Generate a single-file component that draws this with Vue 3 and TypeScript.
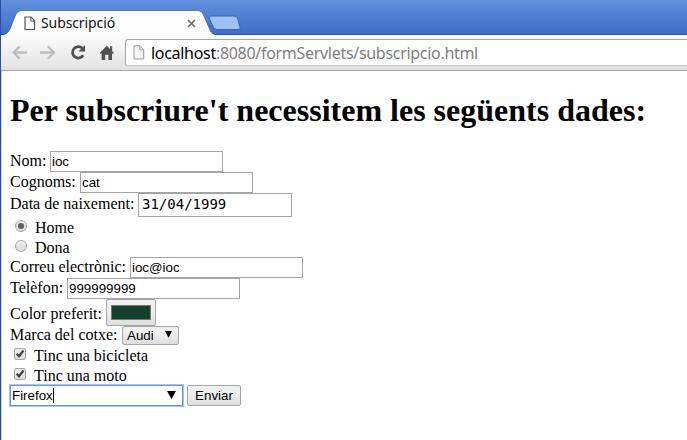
<script setup lang="ts">
import { ref } from 'vue'

const nom = ref('ioc')
const cognoms = ref('cat')
const naixement = ref('31/04/1999')
const sexe = ref('Home')
const correu = ref('ioc@ioc')
const telefon = ref('999999999')
const navegador = ref('Firefox')
const vehicles = ref([
  { label: 'Tinc una bicicleta', checked: true },
  { label: 'Tinc una moto', checked: true },
])
</script>

<template>
  <div class="window">
    <header class="titlebar">
      <div class="tab">
        <svg class="tab-shape" width="216" height="26" viewBox="0 0 216 26">
          <defs>
            <linearGradient id="tabfill" x1="0" y1="0" x2="0" y2="1">
              <stop offset="0" stop-color="#ffffff" />
              <stop offset="1" stop-color="#fcfcfc" />
            </linearGradient>
          </defs>
          <path d="M0 25 C5 25 7 23 9 19 L15 4 Q17 .5 21 .5 H197 Q200 .5 202 4 L209 20 Q211 25 216 25 V26 H0Z" fill="url(#tabfill)" />
          <path d="M0 24.5 C5 24.5 7 23 9 19 L15 4 Q17 .5 21 .5 H197 Q200 .5 202 4 L209 20 Q211 24.5 216 24.5" fill="none" stroke="#2f549f" stroke-opacity=".65" />
        </svg>
        <svg class="tab-page" width="12" height="15" viewBox="0 0 12 15">
          <path d="M1 1H7L10.5 4.7V13.5H1Z" fill="#fff" stroke="#565656" stroke-width="1.2" />
          <path d="M6.8 1V5H10.5" fill="none" stroke="#565656" />
        </svg>
        <span class="tab-title">Subscripció</span>
        <svg class="tab-close" width="9" height="9" viewBox="0 0 9 9">
          <path d="M1 1L8 8M8 1L1 8" stroke="#6b6b6b" stroke-width="1.7" />
        </svg>
      </div>
      <svg class="new-tab" width="33" height="16" viewBox="0 0 33 16">
        <path d="M3.5 1H26Q28.5 1 29.5 3.3L32 12.3Q32.5 14.5 30 14.5H9Q6.5 14.5 5.5 12.3L1.3 3.4Q.5 1 3.5 1Z" fill="#9dc1f1" stroke="#3c67b3" />
      </svg>
    </header>

    <nav class="toolbar">
      <svg class="nav-icons" width="104" height="20" viewBox="0 0 104 20">
        <g fill="none" stroke="#bdbdbd" stroke-width="2.4" stroke-linecap="round" stroke-linejoin="round">
          <path d="M2.5 10.5H15M8 5L2.5 10.5L8 16" />
          <path d="M30 10.5H43M37.5 5L43 10.5L37.5 16" />
        </g>
        <path d="M71.4 6.4A5.7 5.7 0 1 0 72.2 13.2" fill="none" stroke="#505050" stroke-width="2.8" />
        <path d="M74 3V9.6H67.5Z" fill="#505050" />
        <path d="M88.8 11L95.8 3.7L99.2 7.2V4.2H101.2V9.2L102.9 11L101.8 12L101 11.3V18H97.4V12.7H94.2V18H90.6V11.3L89.8 12Z" fill="#505050" />
      </svg>
      <div class="address">
        <svg width="12" height="15" viewBox="0 0 12 15">
          <path d="M1 .8H7L10.7 4.6V14H1Z" fill="#f6f6f6" stroke="#9b9b9b" />
          <path d="M6.8 .8V4.8H10.7" fill="none" stroke="#9b9b9b" />
        </svg>
        <span class="url"><span class="host">localhost</span>:8080/formServlets/subscripcio.html</span>
      </div>
    </nav>

    <main class="page">
      <h1>Per subscriure't necessitem les següents dades:</h1>
      <form @submit.prevent>
        <label class="row text-row"><span class="label nom">Nom:</span><input v-model="nom" class="field" type="text" /></label>
        <label class="row text-row"><span class="label cognoms">Cognoms:</span><input v-model="cognoms" class="field" type="text" /></label>
        <label class="row date-row"><span class="label data">Data de naixement:</span><input v-model="naixement" class="field date" type="text" /></label>
        <label v-for="opcio in ['Home', 'Dona']" :key="opcio" class="row choice-row">
          <input v-model="sexe" class="hidden-control" type="radio" :value="opcio" />
          <span class="radio" :class="{ on: sexe === opcio }"></span>
          <span class="choice-label">{{ opcio }}</span>
        </label>
        <label class="row text-row"><span class="label correu">Correu electrònic:</span><input v-model="correu" class="field" type="text" /></label>
        <label class="row text-row"><span class="label telefon">Telèfon:</span><input v-model="telefon" class="field" type="text" /></label>
        <div class="row color-row"><span class="label color">Color preferit:</span><button class="color-button" type="button"><span class="swatch"></span></button></div>
        <div class="row select-row">
          <span class="label marca">Marca del cotxe:</span>
          <button class="select" type="button">Audi
            <svg width="7" height="7" viewBox="0 0 7 7"><path d="M0 0H7L3.5 6.8Z" fill="#000" /></svg>
          </button>
        </div>
        <label v-for="v in vehicles" :key="v.label" class="row choice-row">
          <input v-model="v.checked" class="hidden-control" type="checkbox" />
          <span class="check">
            <svg v-if="v.checked" width="12" height="12" viewBox="0 0 12 12"><path d="M2.7 5.8L5 8.2L9.5 2.5" fill="none" stroke="#444" stroke-width="2.3" /></svg>
          </span>
          <span class="choice-label">{{ v.label }}</span>
        </label>
        <div class="row text-row">
          <div class="combo">
            <span>{{ navegador }}</span><i class="caret"></i>
            <svg width="9" height="8" viewBox="0 0 9 8"><path d="M0 0H9L4.5 8Z" fill="#000" /></svg>
          </div>
          <button class="submit" type="submit">Enviar</button>
        </div>
      </form>
    </main>
  </div>
</template>

<style>
body {
  overflow: hidden;
}
</style>

<style scoped>
.window {
  box-sizing: border-box;
  width: 687px;
  height: 440px;
  background: #fff;
  border-left: 1px solid #2b4f9c;
  box-shadow: inset 1px 0 #c3cee3;
  overflow: hidden;
}
.titlebar {
  box-sizing: border-box;
  display: flex;
  height: 35px;
  padding-top: 10px;
  background: linear-gradient(#6191dd, #3f6ec8 94%);
  box-shadow: inset 0 -1px #31559f;
}
.tab {
  position: relative;
  display: flex;
  align-items: flex-start;
  width: 208px;
  height: 26px;
  flex: none;
}
.tab-shape {
  position: absolute;
  left: 0;
  top: 0;
}
.tab-page {
  position: relative;
  margin: 6px 0 0 23px;
}
.tab-title {
  position: relative;
  width: 146px;
  margin: 4px 0 0 5px;
  font: 14px/18px "Noto Sans", sans-serif;
  letter-spacing: -0.1px;
  color: #111;
}
.tab-close {
  position: relative;
  margin-top: 9px;
}
.new-tab {
  margin-top: 5px;
  margin-left: -1px;
}
.toolbar {
  box-sizing: border-box;
  display: flex;
  height: 36px;
  padding-top: 4px;
  background: linear-gradient(#fcfcfc, #e2e2e2);
  border-bottom: 1px solid #a5a5a5;
}
.nav-icons {
  flex: none;
  margin: 3px 0 0 10px;
}
.address {
  box-sizing: border-box;
  display: flex;
  align-items: center;
  flex: 1;
  height: 27px;
  margin-left: 10px;
  padding-left: 7px;
  border: 1px solid #a5a5a5;
  border-right: 0;
  border-bottom-color: #bfbfbf;
  border-radius: 3px 0 0 3px;
  background: #fff;
}
.url {
  margin-left: 6px;
  font: 16px/22px "Noto Sans", sans-serif;
  letter-spacing: -0.3px;
  color: #808080;
  white-space: nowrap;
}
.host {
  color: #000;
}
.page {
  padding: 21px 0 0 9px;
  font: 16px/18px "Liberation Serif", serif;
  color: #000;
}
h1 {
  margin: 0 0 22px;
  font-size: 32px;
  line-height: 37px;
  font-weight: bold;
  white-space: nowrap;
}
.row {
  display: flex;
  align-items: flex-start;
}
.text-row {
  height: 21px;
}
.date-row {
  height: 24px;
}
.choice-row {
  height: 20px;
}
.color-row {
  height: 27px;
}
.select-row {
  height: 19px;
}
.label {
  flex: none;
  white-space: nowrap;
  padding-top: 1px;
}
.nom { width: 40px; }
.cognoms { width: 70px; }
.data { width: 128px; padding-top: 2px; }
.correu { width: 120px; }
.telefon { width: 57px; }
.color { width: 96px; padding-top: 6px; }
.marca { width: 112px; padding-top: 0; }
.field {
  box-sizing: border-box;
  width: 173px;
  height: 21px;
  margin: 0;
  padding: 0 1px 1px;
  border: 1px solid #a5a5a5;
  border-radius: 0;
  outline: none;
  background: #fff;
  font: 13.33px "Liberation Sans", sans-serif;
  color: #000;
}
.date {
  width: 154px;
  height: 24px;
  padding: 0 0 2px 3px;
  font: 14px "DejaVu Sans Mono", monospace;
}
.hidden-control {
  appearance: none;
  width: 0;
  height: 0;
  margin: 0;
}
.radio {
  box-sizing: border-box;
  display: flex;
  align-items: center;
  justify-content: center;
  width: 12px;
  height: 12px;
  margin: 3px 0 0 5px;
  border: 1px solid #a6a6a6;
  border-radius: 50%;
  background: linear-gradient(#ededed, #dcdcdc);
}
.radio.on::after {
  content: "";
  width: 6px;
  height: 6px;
  border-radius: 50%;
  background: #5c5c5c;
}
.choice-label {
  margin: 2px 0 0 8px;
}
.check {
  box-sizing: border-box;
  display: flex;
  width: 12px;
  height: 12px;
  margin: 3px 0 0 4px;
  border: 1px solid #a6a6a6;
  border-radius: 2px;
  background: linear-gradient(#ededed, #dcdcdc);
}
.check svg {
  flex: none;
  margin: -1px;
}
.color-button,
.select,
.submit {
  box-sizing: border-box;
  margin: 0;
  border: 1px solid #a6a6a6;
  border-radius: 2px;
  background: linear-gradient(#f0f0f0 35%, #dedede);
  color: #000;
  font: 13.33px "Liberation Sans", sans-serif;
}
.color-button {
  width: 50px;
  height: 27px;
  padding: 5px 4px;
}
.swatch {
  box-sizing: border-box;
  display: block;
  width: 40px;
  height: 15px;
  border: 1px solid #777;
  background: #143f2b;
}
.select {
  display: flex;
  align-items: center;
  justify-content: space-between;
  width: 57px;
  height: 19px;
  padding: 0 6px 1px 4px;
}
.select svg {
  margin-top: -1px;
}
.combo {
  box-sizing: border-box;
  display: flex;
  align-items: center;
  width: 173px;
  height: 21px;
  padding: 0 6px 0 1px;
  border: 1px solid #6593e0;
  box-shadow: 0 0 0 1px #a9c5f2;
  font: 13.33px "Liberation Sans", sans-serif;
}
.combo svg {
  margin: -1px 0 0 auto;
}
.caret {
  width: 1px;
  height: 15px;
  background: #000;
}
.submit {
  width: 54px;
  height: 21px;
  margin-left: 4px;
  padding: 0;
}
</style>
